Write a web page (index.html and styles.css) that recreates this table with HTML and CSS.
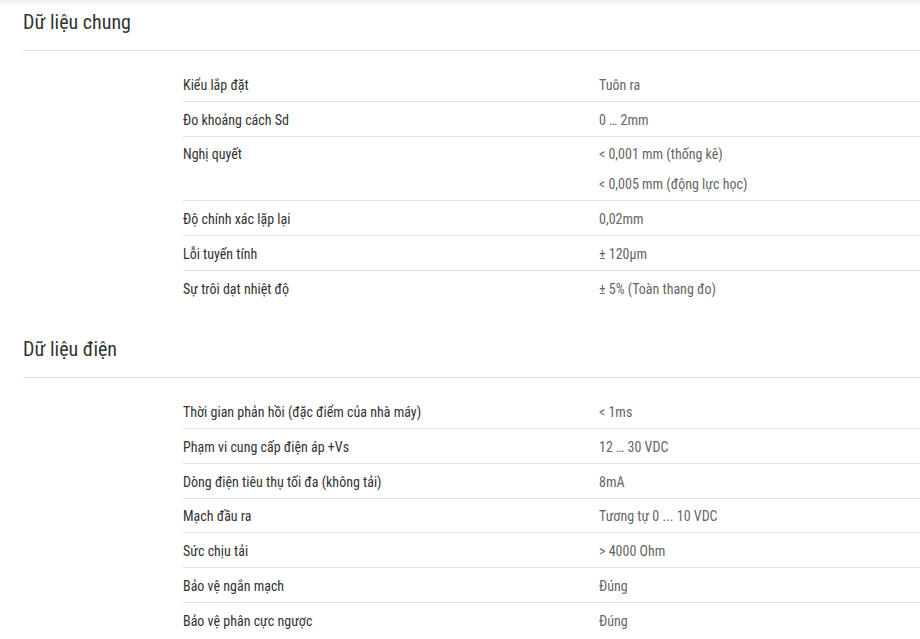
FILE: index.html
```html
<!DOCTYPE html>
<html lang="vi">
<head>
<meta charset="utf-8">
<link rel="stylesheet" href="styles.css">
</head>
<body>
<div class="page">
  <section class="section">
    <h2 class="section-title">Dữ liệu chung</h2>
    <table class="spec">
      <tr><td class="label">Kiểu lắp đặt</td><td class="value">Tuôn ra</td></tr>
      <tr><td class="label">Đo khoảng cách Sd</td><td class="value">0 … 2mm</td></tr>
      <tr><td class="label">Nghị quyết</td><td class="value">&lt; 0,001 mm (thống kê)<br>&lt; 0,005 mm (động lực học)</td></tr>
      <tr><td class="label">Độ chính xác lặp lại</td><td class="value">0,02mm</td></tr>
      <tr><td class="label">Lỗi tuyến tính</td><td class="value">± 120µm</td></tr>
      <tr><td class="label">Sự trôi dạt nhiệt độ</td><td class="value">± 5% (Toàn thang đo)</td></tr>
    </table>
  </section>
  <section class="section">
    <h2 class="section-title">Dữ liệu điện</h2>
    <table class="spec">
      <tr><td class="label">Thời gian phản hồi (đặc điểm của nhà máy)</td><td class="value">&lt; 1ms</td></tr>
      <tr><td class="label">Phạm vi cung cấp điện áp +Vs</td><td class="value">12 … 30 VDC</td></tr>
      <tr><td class="label">Dòng điện tiêu thụ tối đa (không tải)</td><td class="value">8mA</td></tr>
      <tr><td class="label">Mạch đầu ra</td><td class="value">Tương tự 0 ... 10 VDC</td></tr>
      <tr><td class="label">Sức chịu tải</td><td class="value">&gt; 4000 Ohm</td></tr>
      <tr><td class="label">Bảo vệ ngắn mạch</td><td class="value">Đúng</td></tr>
      <tr><td class="label">Bảo vệ phân cực ngược</td><td class="value">Đúng</td></tr>
    </table>
  </section>
</div>
</body>
</html>
```

FILE: styles.css
```css
html, body {
  margin: 0;
  padding: 0;
}
body {
  background: #fff linear-gradient(to bottom, rgba(0,0,0,0.06), rgba(0,0,0,0)) no-repeat;
  background-size: 100% 7px;
  font-family: "Roboto Condensed", Roboto, "Liberation Sans", sans-serif;
  font-stretch: 88%;
  color: #333;
  overflow: hidden;
}
.page {
  padding: 8px 0 0 23px;
}
.section + .section {
  margin-top: 30.5px;
}
.section-title {
  margin: 0;
  font-size: 20px;
  font-weight: 400;
  line-height: 28px;
  color: #333;
  padding-bottom: 14px;
  border-bottom: 1px solid #e2e2e2;
}
.spec {
  margin: 16px 0 0 160px;
  width: calc(100% - 160px);
  border-collapse: collapse;
  font-size: 14px;
}
.spec td {
  padding: 2.8px 0 1px;
  line-height: 30px;
  vertical-align: top;
  border-bottom: 1px solid #e2e2e2;
}
.spec tr:last-child td {
  border-bottom: none;
}
.label {
  width: 416px;
  color: #333;
}
.value {
  color: #666;
}
```
